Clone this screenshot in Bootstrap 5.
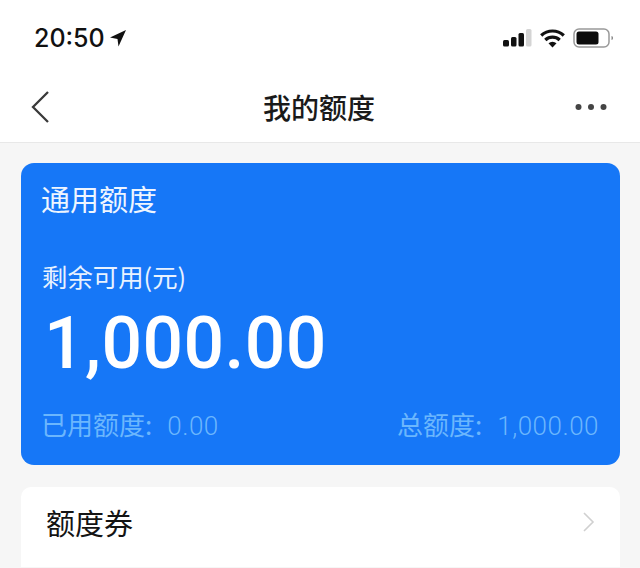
<!DOCTYPE html>
<html lang="zh"><head><meta charset="utf-8">
<link href="https://cdn.jsdelivr.net/npm/bootstrap@5.3.0/dist/css/bootstrap.min.css" rel="stylesheet">
<style>
html,body{height:568px;overflow:hidden}
body{background:#f6f6f6;font-family:"Liberation Sans","Noto Sans CJK SC",sans-serif;color:#222}
.statusbar{height:72px;background:#fff;padding:25px 26px 0 34px}
.clock{font:500 25px/26px "Inter","Liberation Sans",sans-serif;color:#111}
.status-icons{margin-top:3px}
.topbar{height:71px;background:#fff;border-bottom:1px solid #e8e8e8;padding:0 33px 0 31px}
.topside{flex:1 1 0}
.toptitle{font:500 28px/1 "Noto Sans CJK SC",sans-serif;color:#1a1a1a}
.quota{background:#1677f7;margin:20px 20px 0 21px;height:302px;border-radius:13px;color:#fff;padding:17px 21px 0 20px}
.quota-head{font:400 29px/36px "Noto Sans CJK SC",sans-serif;color:#eef5ff}
.quota-sub{font:400 25.400px/32px "Noto Sans CJK SC",sans-serif;margin:44px 0 0 1px;color:#e8f2ff}
.quota-num{font:500 71.500px/1 Roboto,sans-serif;margin:16px 0 0 3px;letter-spacing:.4px}
.quota-foot{font:400 26px/32px "Noto Sans CJK SC",sans-serif;color:#6bb6fd;margin:28px 0 0}
.foot-colon{margin-right:15px}
.foot-num{font:300 26px/32px Roboto,sans-serif;letter-spacing:.5px}
.rowcard{background:#fff;margin:22px 20px 0 21px;height:80px;border-radius:10px 10px 0 0;padding:0 25px 10px 25px}
.rowtext{font:400 29px/1 "Noto Sans CJK SC",sans-serif;color:#141414}
</style></head><body>
<div class="statusbar d-flex justify-content-between align-items-start">
 <div class="d-flex align-items-center gap-1"><span class="clock">20:50</span>
  <svg width="18" height="18" viewBox="0 0 18 18"><path d="M17 1 1 8.500l7.500 1.500 1 7.500z" fill="#111"/></svg></div>
 <div class="status-icons d-flex align-items-center gap-2">
  <svg width="29" height="19" viewBox="0 0 29 19" fill="#111"><rect x="0" y="11" width="6" height="6.500" rx="1.500"/><rect x="8" y="8" width="5.500" height="9.500" rx="1.500"/><rect x="15.500" y="4" width="5.500" height="13.500" rx="1.500"/><rect x="23" y="0" width="5.500" height="17.500" rx="1.500" fill="#d4d4d4"/></svg>
  <svg width="25" height="19" viewBox="0 0 25 19"><path d="M1.200 6.500a16.500 16.500 0 0 1 22.600 0M5.300 11a10.500 10.500 0 0 1 14.400 0" fill="none" stroke="#111" stroke-width="3.200"/><path d="M8.500 14.300a6 6 0 0 1 8 0l-4 4.200z" fill="#111"/></svg>
  <svg width="41" height="20" viewBox="0 0 41 20"><rect x="1" y="1" width="35" height="18" rx="5" fill="none" stroke="#999" stroke-width="1.500"/><rect x="3.500" y="3.500" width="22" height="13" rx="2.500" fill="#0c0c0c"/><path d="M38.500 8c1.200.3 1.500 1 1.500 2s-.3 1.700-1.500 2z" fill="#888"/></svg>
 </div>
</div>
<div class="topbar d-flex align-items-center">
 <div class="topside d-flex"><svg width="19" height="34" viewBox="0 0 19 34" fill="none" stroke="#3a3a3a" stroke-width="2.300"><path d="M17 2 2 17l15 15"/></svg></div>
 <span class="toptitle">我的额度</span>
 <div class="topside d-flex justify-content-end"><svg width="32" height="8" viewBox="0 0 32 8" fill="#444"><circle cx="3.500" cy="4" r="3"/><circle cx="16" cy="4" r="3"/><circle cx="28.500" cy="4" r="3"/></svg></div>
</div>
<div class="quota">
 <div class="quota-head">通用额度</div>
 <div class="quota-sub">剩余可用(元)</div>
 <div class="quota-num">1,000.00</div>
 <div class="quota-foot d-flex justify-content-between"><span>已用额度<span class="foot-colon">:</span><span class="foot-num">0.00</span></span><span>总额度<span class="foot-colon">:</span><span class="foot-num">1,000.00</span></span></div>
</div>
<div class="rowcard d-flex justify-content-between align-items-center">
 <span class="rowtext">额度券</span>
 <svg width="13" height="22" viewBox="0 0 13 22" fill="none" stroke="#d0d0d0" stroke-width="1.600"><path d="m2 2 9 9-9 9"/></svg>
</div>
<script src="https://cdn.jsdelivr.net/npm/bootstrap@5.3.0/dist/js/bootstrap.bundle.min.js"></script>
</body></html>
